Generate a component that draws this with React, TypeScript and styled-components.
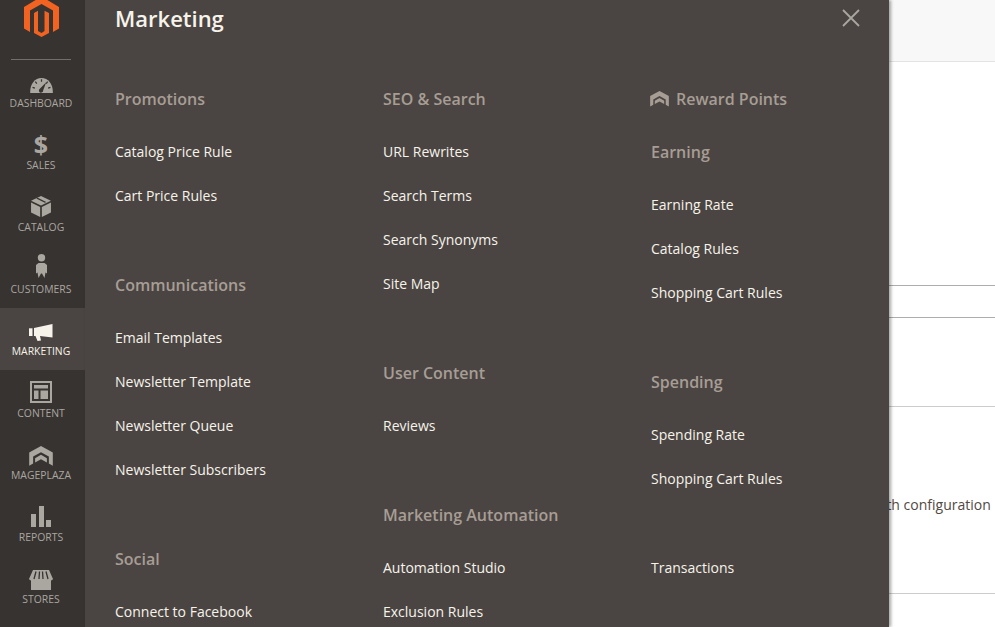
import React from "react";
import styled, { createGlobalStyle } from "styled-components";

const GlobalStyle = createGlobalStyle`
  html, body {
    margin: 0;
    height: 100%;
    overflow: hidden;
    background: #ffffff;
    font-family: "Open Sans", "Liberation Sans", sans-serif;
  }
`;

const Page = styled.div`
  display: flex;
  height: 100vh;
  overflow: hidden;
`;

const Sidebar = styled.nav`
  flex: 0 0 85px;
  background: #373330;
  display: flex;
  flex-direction: column;
  align-items: stretch;
`;

const LogoBox = styled.div`
  height: 60px;
  padding-right: 2px;
  box-sizing: border-box;
  display: flex;
  justify-content: center;
  position: relative;
  overflow: hidden;

  &::after {
    content: "";
    position: absolute;
    left: 11px;
    right: 14px;
    bottom: 0;
    height: 1px;
    background: #736e69;
  }
`;

const LogoSvg = styled.svg`
  width: 35px;
  height: 37px;
`;

const NavItem = styled.a<{ $active?: boolean }>`
  height: 62px;
  box-sizing: border-box;
  padding: 8px 3px 0 0;
  display: flex;
  flex-direction: column;
  align-items: center;
  background: ${(p) => (p.$active ? "#4a4542" : "transparent")};
  color: ${(p) => (p.$active ? "#f7f3eb" : "#aaa6a0")};
`;

const NavIcon = styled.span`
  height: 26px;
  display: flex;
  align-items: flex-end;
  justify-content: center;
`;

const DollarGlyph = styled.span`
  font-size: 25px;
  font-weight: 700;
  line-height: 24px;
  color: #aaa6a0;
`;

const NavLabel = styled.span`
  font-size: 10.4px;
  line-height: 14px;
  margin-top: 2px;
  white-space: nowrap;
`;

const Main = styled.main`
  flex: 1;
  min-width: 0;
  display: flex;
  flex-direction: column;
`;

const HeaderBar = styled.div`
  height: 62px;
  box-sizing: border-box;
  background: #f8f8f8;
  border-bottom: 1px solid #e3e3e3;
`;

const Row = styled.div<{ $height: number; $line: string }>`
  height: ${(p) => p.$height}px;
  box-sizing: border-box;
  border-bottom: 1px solid ${(p) => p.$line};
  display: flex;
  align-items: center;
`;

const RowText = styled.span`
  margin-left: 787px;
  padding-top: 8px;
  font-size: 14px;
  color: #514943;
  white-space: nowrap;
`;

const Panel = styled.section`
  position: absolute;
  left: 85px;
  top: 0;
  bottom: 0;
  width: 804px;
  box-sizing: border-box;
  padding: 0 30px;
  background: #4a4542;
  box-shadow: 2px 0 3px rgba(0, 0, 0, 0.35);
  overflow: hidden;
`;

const PanelTitle = styled.h1`
  margin: 0 0 52px;
  height: 36px;
  font-size: 22px;
  line-height: 36px;
  font-weight: 600;
  color: #f7f3eb;
`;

const CloseButton = styled.button`
  position: absolute;
  top: 8px;
  right: 28px;
  width: 20px;
  height: 20px;
  padding: 0;
  border: 0;
  background: none;
  display: flex;
`;

const Columns = styled.div`
  display: grid;
  grid-template-columns: 268px 268px 1fr;
`;

const Column = styled.div`
  display: flex;
  flex-direction: column;
`;

const Section = styled.div`
  margin-bottom: 56px;
  display: flex;
  flex-direction: column;
`;

const BareSection = styled(Section)`
  margin-top: -11px;
`;

const Heading = styled.h2`
  margin: 0 0 20px;
  height: 22px;
  display: flex;
  align-items: center;
  font-size: 16px;
  line-height: 22px;
  font-weight: 600;
  color: #a79d95;
  white-space: nowrap;
`;

const RewardHeading = styled(Heading)`
  margin-bottom: 31px;
  margin-left: -1px;
  gap: 7px;
`;

const MenuLink = styled.a`
  height: 44px;
  line-height: 44px;
  font-size: 14px;
  color: #f7f3eb;
  white-space: nowrap;
`;

const Chevrons = ({ size, color }: { size: number; color: string }) => (
  <svg width={size} height={size * 0.82} viewBox="0 0 24 20">
    <path
      fill={color}
      d="M12 0 24 6.500V20l-4-2.200v-7L12 6.400 4 10.800v7L0 20V6.500Z M12 9l6 3.400v4.400L12 13.500 6 16.800v-4.400Z"
    />
  </svg>
);

const GREY = "#aaa6a0";
const DARK = "#373330";

const icons: Record<string, React.ReactNode> = {
  dashboard: (
    <svg width="23" height="17" viewBox="0 0 24 18">
      <path fill={GREY} d="M0 16C0 7 5 1 12 1s12 6 12 15v1H0Z" />
      <path
        stroke={DARK}
        strokeWidth="1.300"
        d="M12 2.500V5M5.500 5l1.500 2M18.500 5 17 7M2.500 11l2.500.8M21.500 11l-2.500.8"
      />
      <path fill={DARK} d="M17 5.500 13.800 14a2.300 2.300 0 1 1-3.600-1.600Z" />
    </svg>
  ),
  sales: <DollarGlyph>$</DollarGlyph>,
  catalog: (
    <svg width="20" height="22" viewBox="0 0 19 21">
      <path fill={GREY} d="M9.500 0 19 4.500 9.500 9 0 4.500Z" />
      <path fill={DARK} d="m5 2.400 1.300-.7 8.200 4-1.300.7Z" />
      <path
        fill={GREY}
        d="M0 6.300 8.700 10.500V20L0 15.800ZM19 6.300 10.300 10.500V20L19 15.800Z"
      />
    </svg>
  ),
  customers: (
    <svg width="11" height="26" viewBox="0 0 11 26">
      <circle cx="5.500" cy="3.800" r="3.700" fill={GREY} />
      <path
        fill={GREY}
        d="M2.500 9h6L11 11v8.500L9.500 18.500 8.500 24 6 19.500H5L2.500 24 1.500 18.500 0 19.500V11Z"
      />
    </svg>
  ),
  marketing: (
    <svg width="24" height="18" viewBox="0 0 24 18">
      <path fill="#f7f3eb" d="M5 4 23.500 0V13.500L11 12l1 4.500-3.500.5L6.500 12H5Z" />
      <path fill="#f7f3eb" d="M0 4.300h3.500V12H0Z" />
    </svg>
  ),
  content: (
    <svg width="22" height="23" viewBox="0 0 22 23">
      <path
        fill={GREY}
        fillRule="evenodd"
        d="M0 0h22v22H0ZM2 2v18h18V2ZM4 4h14v3.500H4ZM4 9.500h4.500V18H4ZM10.500 9.500H18V18h-7.500Z"
      />
    </svg>
  ),
  mageplaza: <Chevrons size={24} color={GREY} />,
  reports: (
    <svg width="20" height="22" viewBox="0 0 20 22">
      <path fill={GREY} d="M0 8h5v13H0ZM8 0h5v21H8ZM15 14h5v7h-5Z" />
    </svg>
  ),
  stores: (
    <svg width="24" height="20" viewBox="0 0 24 20">
      <path
        fill={GREY}
        d="M4 0h16l4 9a2.500 2.500 0 0 1-2 1.500V20H2V10.500A2.500 2.500 0 0 1 0 9Z"
      />
      <path
        stroke={DARK}
        strokeWidth="1.300"
        d="M7 1.500 5 9M10.500 1.500 10 9M13.500 1.500 14 9M17 1.500l2 7.500"
      />
    </svg>
  ),
};

const navItems = [
  { key: "dashboard", label: "DASHBOARD" },
  { key: "sales", label: "SALES" },
  { key: "catalog", label: "CATALOG" },
  { key: "customers", label: "CUSTOMERS" },
  { key: "marketing", label: "MARKETING", active: true },
  { key: "content", label: "CONTENT" },
  { key: "mageplaza", label: "MAGEPLAZA" },
  { key: "reports", label: "REPORTS" },
  { key: "stores", label: "STORES" },
];

const App: React.FC = () => {
  return (
    <Page>
      <GlobalStyle />
      <Sidebar>
        <LogoBox>
          <LogoSvg viewBox="0 0 35 37">
            <path
              fill="#f26322"
              d="M17.500-3.500 35 7V28.500L29 32V10.500L17.500 4 6 10.500V32L0 28.500V7Z"
            />
            <path
              fill="#f26322"
              d="M10 13 14 10.700V31L17.500 33 20.500 31V10.700L25 13V33L17.500 37 10 33Z"
            />
          </LogoSvg>
        </LogoBox>
        {navItems.map((item) => (
          <NavItem key={item.key} $active={item.active}>
            <NavIcon>{icons[item.key]}</NavIcon>
            <NavLabel>{item.label}</NavLabel>
          </NavItem>
        ))}
      </Sidebar>
      <Main>
        <HeaderBar />
        <Row $height={224} $line="#adadad" />
        <Row $height={32} $line="#adadad" />
        <Row $height={89} $line="#cccccc" />
        <Row $height={187} $line="#cccccc">
          <RowText>with configuration</RowText>
        </Row>
      </Main>
      <Panel>
        <PanelTitle>Marketing</PanelTitle>
        <CloseButton aria-label="Close">
          <svg width="20" height="20" viewBox="0 0 20 20">
            <path stroke="#aaa6a0" strokeWidth="1.800" d="M2 2l16 16M18 2 2 18" />
          </svg>
        </CloseButton>
        <Columns>
          <Column>
            <Section>
              <Heading>Promotions</Heading>
              <MenuLink>Catalog Price Rule</MenuLink>
              <MenuLink>Cart Price Rules</MenuLink>
            </Section>
            <Section>
              <Heading>Communications</Heading>
              <MenuLink>Email Templates</MenuLink>
              <MenuLink>Newsletter Template</MenuLink>
              <MenuLink>Newsletter Queue</MenuLink>
              <MenuLink>Newsletter Subscribers</MenuLink>
            </Section>
            <Section>
              <Heading>Social</Heading>
              <MenuLink>Connect to Facebook</MenuLink>
            </Section>
          </Column>
          <Column>
            <Section>
              <Heading>SEO &amp; Search</Heading>
              <MenuLink>URL Rewrites</MenuLink>
              <MenuLink>Search Terms</MenuLink>
              <MenuLink>Search Synonyms</MenuLink>
              <MenuLink>Site Map</MenuLink>
            </Section>
            <Section>
              <Heading>User Content</Heading>
              <MenuLink>Reviews</MenuLink>
            </Section>
            <Section>
              <Heading>Marketing Automation</Heading>
              <MenuLink>Automation Studio</MenuLink>
              <MenuLink>Exclusion Rules</MenuLink>
            </Section>
          </Column>
          <Column>
            <RewardHeading>
              <Chevrons size={19} color="#a79d95" />
              Reward Points
            </RewardHeading>
            <Section>
              <Heading>Earning</Heading>
              <MenuLink>Earning Rate</MenuLink>
              <MenuLink>Catalog Rules</MenuLink>
              <MenuLink>Shopping Cart Rules</MenuLink>
            </Section>
            <Section>
              <Heading>Spending</Heading>
              <MenuLink>Spending Rate</MenuLink>
              <MenuLink>Shopping Cart Rules</MenuLink>
            </Section>
            <BareSection>
              <MenuLink>Transactions</MenuLink>
            </BareSection>
          </Column>
        </Columns>
      </Panel>
    </Page>
  );
};

export default App;
